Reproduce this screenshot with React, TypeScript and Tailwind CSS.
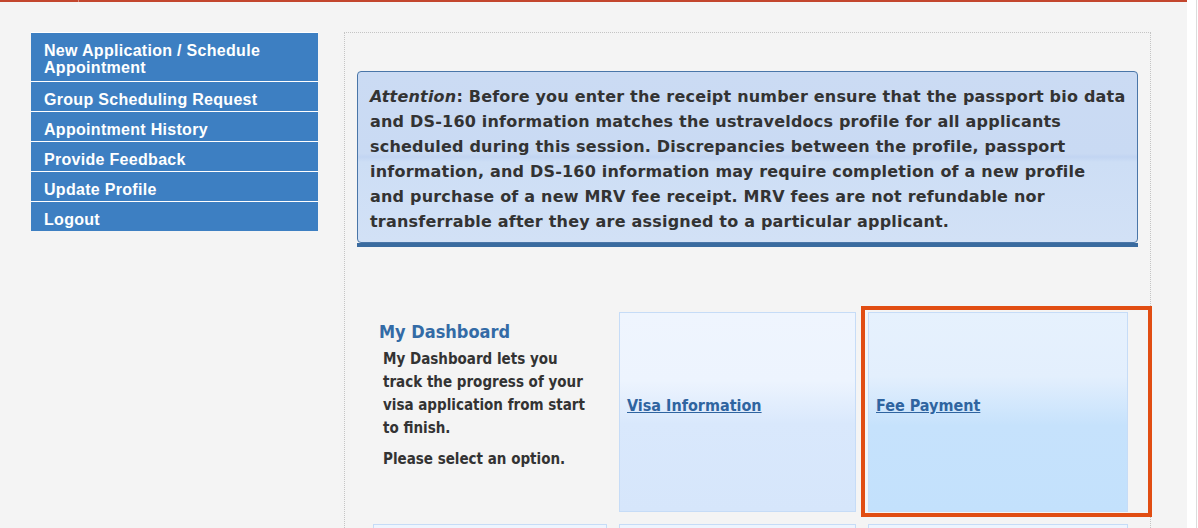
import React from "react";

const sideItems: string[][] = [
  ["New Application / Schedule", "Appointment"],
  ["Group Scheduling Request"],
  ["Appointment History"],
  ["Provide Feedback"],
  ["Update Profile"],
  ["Logout"],
];

const verdana = { fontFamily: '"DejaVu Sans", Verdana, sans-serif' };
const tahoma = { fontFamily: '"DejaVu Sans Condensed", "DejaVu Sans", Tahoma, sans-serif' };

const attentionLines = [
  "information matches the ustraveldocs profile for all applicants",
  "scheduled during this session. Discrepancies between the profile, passport",
  "information, and DS-160 information may require completion of a new profile",
  "and purchase of a new MRV fee receipt. MRV fees are not refundable nor",
  "transferrable after they are assigned to a particular applicant.",
];

export default function App() {
  return (
    <div className="w-[1198px] h-[528px] overflow-hidden bg-white flex">
      <div className="w-[1187px] h-full bg-[#f4f4f4] relative shrink-0">
        <div className="h-[2px] bg-[#c3462e] flex">
          <div className="w-[78px]" />
          <div className="w-[1px] bg-[#d98a7a]" />
        </div>
        <div className="flex pt-[30px]">
          {/* Sidebar */}
          <div
            className="ml-[31px] w-[287px] border-t border-white flex flex-col gap-[1px] bg-white self-start"
            style={{ fontFamily: '"Liberation Sans", Arial, sans-serif' }}
          >
            {sideItems.map((lines, i) => (
              <div
                key={i}
                className={`bg-[#3d7fc2] text-white font-bold text-[16px] leading-[17px] tracking-[0.3px] pl-[13px] pt-[9px] ${
                  i === 0 ? "pb-[5px]" : "pb-[3px]"
                }`}
              >
                {lines.map((l, j) => (
                  <div key={j}>{l}</div>
                ))}
              </div>
            ))}
          </div>

          {/* Main panel */}
          <div className="ml-[26px] w-[807px] h-[520px] border border-dotted border-[#c4c4c4] px-[12px] pt-[38px]">
            <div
              className="rounded-[4px] border border-[#4a76a8] h-[172px] pl-[12px] pt-[12px] text-[16px] leading-[25px] font-bold text-[#333333] tracking-[0.2px] whitespace-nowrap bg-[linear-gradient(to_bottom,#cbdbf3_0%,#c9daf3_48%,#c2d5f2_50%,#cddef5_53%,#d2e1f6_100%)]"
              style={verdana}
            >
              <div>
                <i>Attention</i>: Before you enter the receipt number ensure that the passport bio data
              </div>
              <div>and DS-160 {attentionLines[0]}</div>
              {attentionLines.slice(1).map((l, i) => (
                <div key={i}>{l}</div>
              ))}
            </div>
            <div className="h-[4px] bg-[#3a6b9f]" />

            {/* Dashboard grid */}
            <div className="mt-[65px] ml-[16px] grid grid-cols-[234px_237px_260px] gap-x-[12px] gap-y-[12px]" style={tahoma}>
              <div className="pt-[9px]">
                <div className="pl-[6px] text-[18px] leading-[22px] font-bold text-[#336ba6]">My Dashboard</div>
                <div className="pl-[10px] pt-[5px] w-[222px] text-[15px] leading-[23px] font-bold text-[#333333]">
                  <p>My Dashboard lets you track the progress of your visa application from start to finish.</p>
                  <p className="mt-[8px]">Please select an option.</p>
                </div>
              </div>
              <div className="h-[200px] border border-[#c6dcf7] flex items-center pl-[7px] pb-[12px] bg-[linear-gradient(to_bottom,#eff5fe_0%,#edf4fe_34%,#d9e8fc_56%,#d6e6fb_100%)]">
                <a className="text-[#2f64a0] underline font-bold text-[16px]" href="#">
                  Visa Information
                </a>
              </div>
              <div className="h-[200px] border border-[#c6dcf7] flex items-center pl-[7px] pb-[12px] bg-[linear-gradient(to_bottom,#e6f1fd_0%,#e3effd_32%,#c6e2fc_57%,#c3e1fc_100%)]">
                <a className="text-[#2f64a0] underline font-bold text-[16px]" href="#">
                  Fee Payment
                </a>
              </div>
              <div className="h-[60px] border border-[#c6dcf7] bg-[#eef5fe]" />
              <div className="h-[60px] border border-[#c6dcf7] bg-[#eef5fe]" />
              <div className="h-[60px] border border-[#c6dcf7] bg-[#eef5fe]" />
            </div>
          </div>
        </div>

        {/* Highlight annotation */}
        <div className="absolute left-[861px] top-[306px] w-[291px] h-[211px] border-[4px] border-[#e14d12] pointer-events-none" />
      </div>
      <div className="w-[9px] bg-white" />
      <div className="w-[1px] bg-[#dcdcdc]" />
      <div className="w-[1px] bg-white" />
    </div>
  );
}
